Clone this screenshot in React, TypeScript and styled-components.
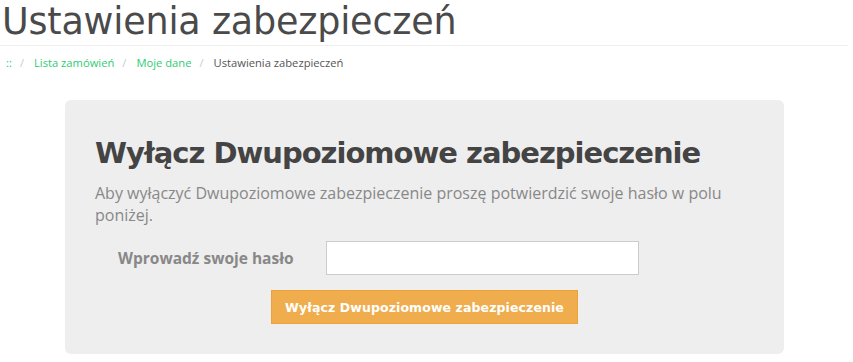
import styled, { createGlobalStyle } from 'styled-components'

const GlobalStyle = createGlobalStyle`
  body {
    margin: 0;
    background: #fff;
    font-family: 'Open Sans', sans-serif;
  }
`

const Page = styled.div`
  width: 853px;
  padding: 0 5px 0 0;
  box-sizing: border-box;
`

const PageTitle = styled.h1`
  margin: 0;
  padding: 0 0 0 2px;
  height: 46px;
  font-family: 'DejaVu Sans', sans-serif;
  font-weight: normal;
  font-size: 36.5px;
  line-height: 43px;
  color: #4a4a4a;
  letter-spacing: -0.2px;
  border-bottom: 1px solid #eee;
  box-sizing: border-box;
`

const Breadcrumb = styled.ol`
  display: flex;
  list-style: none;
  margin: 0;
  padding: 9px 0 0 6px;
  font-size: 11.2px;
  line-height: 16px;
`

const Crumb = styled.li<{ $active?: boolean }>`
  color: ${(p) => (p.$active ? '#555' : '#2ecc71')};
  &:not(:first-child)::before {
    content: '/';
    color: #ccc;
    padding: 0 10px 0 8px;
  }
`

const Card = styled.div`
  margin: 29px 0 0 65px;
  width: 719px;
  height: 254px;
  box-sizing: border-box;
  padding: 33px 30px 0;
  background: #eee;
  border-radius: 6px;
`

const CardTitle = styled.h2`
  margin: 0;
  font-family: 'DejaVu Sans', sans-serif;
  font-weight: bold;
  font-size: 29px;
  letter-spacing: -1px;
  line-height: 40px;
  color: #444;
`

const Lead = styled.p`
  margin: 9px 0 0;
  font-size: 16px;
  line-height: 22px;
  color: #888;
`

const FormRow = styled.div`
  display: flex;
  align-items: center;
  margin-top: 15px;
  padding-left: 23px;
`

const Label = styled.label`
  width: 208px;
  font-size: 15.5px;
  font-weight: bold;
  color: #888;
`

const Input = styled.input`
  width: 313px;
  height: 34px;
  box-sizing: border-box;
  border: 1px solid #ccc;
  background: #fff;
  outline: none;
`

const Actions = styled.div`
  display: flex;
  justify-content: center;
  margin-top: 15px;
`

const Button = styled.button`
  width: 307px;
  height: 34px;
  border: 1px solid #eea236;
  background: #f0ad4e;
  color: #fff;
  font-family: 'DejaVu Sans', sans-serif;
  font-weight: 600;
  font-size: 12.5px;
  letter-spacing: 0.1px;
  cursor: pointer;
`

export default function App() {
  return (
    <Page>
      <GlobalStyle />
      <PageTitle>Ustawienia zabezpieczeń</PageTitle>
      <Breadcrumb>
        <Crumb>::</Crumb>
        <Crumb>Lista zamówień</Crumb>
        <Crumb>Moje dane</Crumb>
        <Crumb $active>Ustawienia zabezpieczeń</Crumb>
      </Breadcrumb>
      <Card>
        <CardTitle>Wyłącz Dwupoziomowe zabezpieczenie</CardTitle>
        <Lead>
          Aby wyłączyć Dwupoziomowe zabezpieczenie proszę potwierdzić swoje hasło w polu
          poniżej.
        </Lead>
        <FormRow>
          <Label>Wprowadź swoje hasło</Label>
          <Input type='password' />
        </FormRow>
        <Actions>
          <Button>Wyłącz Dwupoziomowe zabezpieczenie</Button>
        </Actions>
      </Card>
    </Page>
  )
}
